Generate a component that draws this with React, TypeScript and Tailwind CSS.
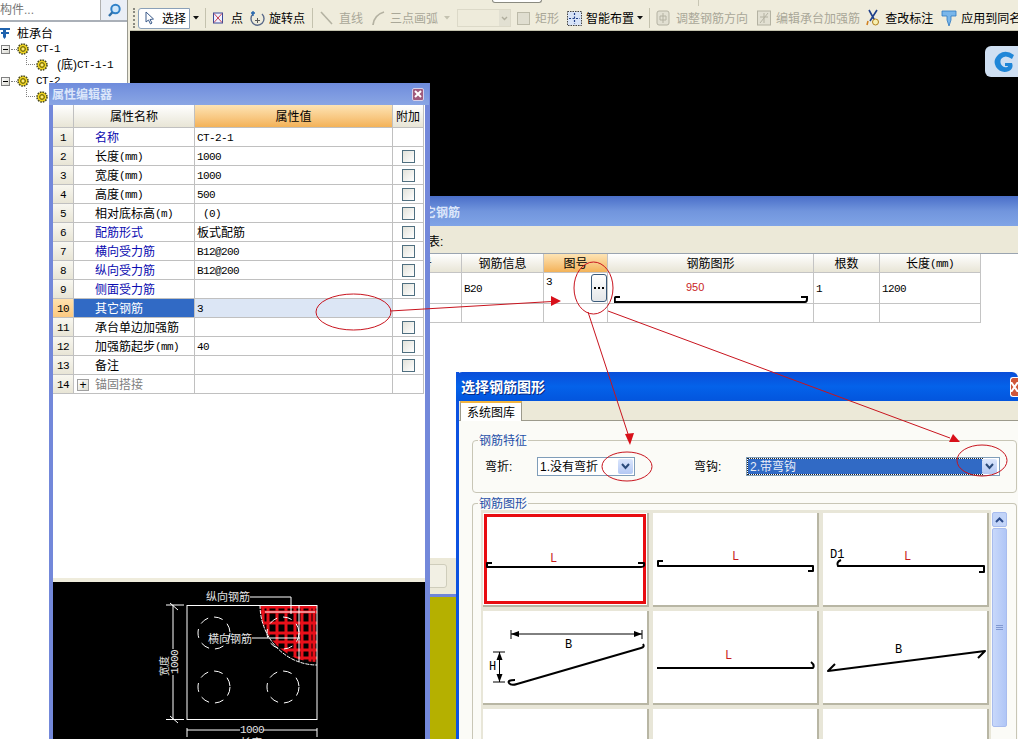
import React from "react";

const cjk = "font-['Liberation_Sans','Noto_Sans_CJK_SC',sans-serif] text-[12px] leading-none";
const mono = "font-['Liberation_Mono','Noto_Sans_CJK_SC',monospace] text-[11px] tracking-[-0.6px] leading-none";

function Gear({ size = 12 }: { size?: number }) {
  return (
    <svg width={size} height={size} viewBox="0 0 12 12" className="shrink-0">
      <circle cx="6" cy="6" r="5" fill="#f4d820" stroke="#4a4a20" strokeWidth="1.6" strokeDasharray="1.6 1" />
      <circle cx="6" cy="6" r="2.4" fill="#e8c810" stroke="#5a5a20" strokeWidth="1" />
      <circle cx="6" cy="6" r="0.9" fill="#fff8c0" />
    </svg>
  );
}

function Expander() {
  return (
    <div className="w-[9px] h-[9px] border border-[#808080] bg-gradient-to-br from-white to-[#d8d8d0] flex items-center justify-center shrink-0">
      <div className="w-[5px] h-px bg-black" />
    </div>
  );
}

function TreeLeft() {
  return (
    <div className="w-[128px] shrink-0 h-full bg-white border-r border-[#9a9a90] flex flex-col">
      <div className="h-[22px] flex border-b-2 border-[#aab0b8] shrink-0">
        <div className={`w-[101px] h-[20px] border-r border-[#b0b0b0] text-[#777] flex items-center ${cjk}`}>构件...</div>
        <div className="flex-1 bg-[#eaeef6] flex items-center justify-center">
          <svg width="15" height="15" viewBox="0 0 15 15">
            <circle cx="8.5" cy="6" r="4.2" fill="#cfe6fa" stroke="#2f80c8" strokeWidth="2" />
            <path d="M5.4 9.2 L2 13" stroke="#2f6fa8" strokeWidth="2.4" />
          </svg>
        </div>
      </div>
      <div className="relative flex-1 pt-[3px]">
        <div className="flex items-center h-[16px]">
          <svg width="10" height="14" viewBox="0 0 10 14" className="shrink-0">
            <path d="M0 2 H10 V4 H6 V6 H9 V8 H6 V11 L4.5 13 L3 11 V8 H1 V6 H3 V4 H0 Z" fill="#1f62ad" />
          </svg>
          <span className={`ml-[7px] pt-[1px] ${cjk}`}>桩承台</span>
        </div>
        <div className="flex items-center h-[16px] pl-[1px]">
          <Expander />
          <div className="w-[6px] border-t border-dotted border-[#808080] ml-[1px]" />
          <Gear />
          <span className={`ml-[7px] ${mono}`}>CT-1</span>
        </div>
        <div className="flex items-center h-[16px] pl-[26px]">
          <div className="w-[9px] h-[9px] -mt-[9px] border-l border-b border-dotted border-[#808080]" />
          <div className="ml-[1px]"><Gear /></div>
          <span className={`ml-[9px] ${cjk}`}>(底)</span>
          <span className={mono}>CT-1-1</span>
        </div>
        <div className="flex items-center h-[16px] pl-[1px]">
          <Expander />
          <div className="w-[6px] border-t border-dotted border-[#808080] ml-[1px]" />
          <Gear />
          <span className={`ml-[7px] ${mono}`}>CT-2</span>
        </div>
        <div className="flex items-center h-[16px] pl-[26px]">
          <div className="w-[9px] h-[9px] -mt-[9px] border-l border-b border-dotted border-[#808080]" />
          <div className="ml-[1px]"><Gear /></div>
        </div>
      </div>
    </div>
  );
}

function Arrow({ cls }: { cls: string }) {
  return (
    <svg width="6" height="4" viewBox="0 0 6 4" className={`shrink-0 ${cls}`}>
      <path d="M0 0 H6 L3 3.5 Z" fill="#111" />
    </svg>
  );
}

const Sep = ({ cls }: { cls: string }) => <div className={`w-px h-[20px] bg-[#c4c2ae] shrink-0 ${cls}`} />;
const Off = "text-[#a9a798] whitespace-nowrap shrink-0";
const On = "text-black whitespace-nowrap shrink-0";

function Toolbar() {
  return (
    <div className="shrink-0">
      <div className="h-[6px] bg-[#efecdc] pl-[362px] flex">
        <div className="w-[50px] h-[3px] bg-white border-x border-b border-[#8a8a80] rounded-b" />
        <div className="w-px h-[6px] bg-[#c8c6b4] ml-[156px]" />
      </div>
      <div className={`h-[25px] bg-[#efecdc] border-b border-[#c4c2ae] flex items-center pl-[3px] overflow-hidden [&>span]:pt-[2px] ${cjk}`}>
        <div className="w-[3px] h-[20px] shrink-0 border-l-2 border-dotted border-[#8a8a80]" />
        <div className="ml-[2px] w-[52px] h-[21px] shrink-0 bg-white border border-[#8aa0b8] rounded-l-[3px] flex items-center pl-[6px]">
          <svg width="10" height="14" viewBox="0 0 10 14" className="shrink-0">
            <path d="M1 1 L1 11 L3.5 9 L5.5 13 L7 12 L5 8.5 L8.5 8 Z" fill="#fff" stroke="#3a5a8a" strokeWidth="1" />
          </svg>
          <span className="ml-[7px] pt-[2px]">选择</span>
        </div>
        <Arrow cls="ml-[3px]" />
        <Sep cls="ml-[6px]" />
        <svg width="10" height="12" viewBox="0 0 10 12" className="shrink-0 ml-[7px]">
          <rect x="0.5" y="1" width="9" height="10" fill="#f0f0ff" stroke="#3a4a9a" />
          <path d="M1 1.5 L9 10.5 M9 1.5 L1 10.5" stroke="#c03040" strokeWidth="0.9" />
        </svg>
        <span className={`ml-[8px] ${On}`}>点</span>
        <svg width="15" height="17" viewBox="0 0 15 17" className="shrink-0 ml-[7px]">
          <path d="M3 4 A6.5 6.5 0 1 0 12 4" fill="none" stroke="#5a6a8a" strokeWidth="1.4" />
          <path d="M3 1 V6 M1 3 L5 3" stroke="#1f62ad" strokeWidth="1.3" />
          <path d="M7.5 8 V13 M5 10.5 H10" stroke="#5a5a5a" strokeWidth="1" />
        </svg>
        <span className={`ml-[4px] ${On}`}>旋转点</span>
        <Sep cls="ml-[7px]" />
        <svg width="13" height="14" viewBox="0 0 13 14" className="shrink-0 ml-[7px]">
          <path d="M1 1 L12 13" stroke="#b4b2a2" strokeWidth="1.6" />
        </svg>
        <span className={`ml-[6px] ${Off}`}>直线</span>
        <svg width="14" height="15" viewBox="0 0 14 15" className="shrink-0 ml-[8px]">
          <path d="M2 14 Q3 4 13 1" fill="none" stroke="#b4b2a2" strokeWidth="1.8" />
        </svg>
        <span className={`ml-[5px] ${Off}`}>三点画弧</span>
        <svg width="6" height="4" viewBox="0 0 6 4" className="shrink-0 ml-[6px]"><path d="M0 0 H6 L3 3.5 Z" fill="#c4c2b0" /></svg>
        <div className="ml-[7px] w-[54px] h-[18px] shrink-0 bg-[#eeebdb] border border-[#dcd9c8] flex justify-end">
          <div className="w-[11px] h-full bg-[#e2e0d2] flex items-center justify-center">
            <svg width="7" height="5" viewBox="0 0 7 5"><path d="M1 1 L3.5 3.5 L6 1" fill="none" stroke="#b0ae9e" strokeWidth="1.4" /></svg>
          </div>
        </div>
        <div className="ml-[6px] w-[13px] h-[13px] shrink-0 bg-[#e0ded0] border border-[#bcbaa8]" />
        <span className={`ml-[5px] ${Off}`}>矩形</span>
        <svg width="15" height="15" viewBox="0 0 15 15" className="shrink-0 ml-[8px]">
          <rect x="0.5" y="0.5" width="14" height="14" fill="#d8e4f8" stroke="#444" strokeDasharray="1.5 1" />
          <path d="M7.5 2 V13 M2 7.5 H13" stroke="#1f3f8a" strokeWidth="1.2" strokeDasharray="2 1.5" />
        </svg>
        <span className={`ml-[4px] ${On}`}>智能布置</span>
        <Arrow cls="ml-[3px]" />
        <Sep cls="ml-[6px]" />
        <svg width="14" height="16" viewBox="0 0 14 16" className="shrink-0 ml-[6px]">
          <rect x="1" y="1" width="12" height="14" rx="2" fill="#e2e0d2" stroke="#b4b2a2" />
          <path d="M7 3 V13 M4 6 H10 V10 H4 Z" fill="none" stroke="#b4b2a2" />
        </svg>
        <span className={`ml-[6px] ${Off}`}>调整钢筋方向</span>
        <svg width="14" height="16" viewBox="0 0 14 16" className="shrink-0 ml-[9px]">
          <rect x="0.5" y="1" width="13" height="14" fill="#e2e0d2" stroke="#b4b2a2" />
          <path d="M3 13 L11 3 M3 7 H11 M7 3 V13" fill="none" stroke="#b4b2a2" />
        </svg>
        <span className={`ml-[5px] ${Off}`}>编辑承台加强筋</span>
        <svg width="14" height="18" viewBox="0 0 14 18" className="shrink-0 ml-[6px]">
          <path d="M3 1 L9 12 M11 1 L4 12" stroke="#1f3f8a" strokeWidth="1.6" />
          <circle cx="9.5" cy="13" r="3" fill="#f8f0b0" stroke="#b08020" />
          <path d="M2 12 L1 16" stroke="#d08020" strokeWidth="1.5" />
        </svg>
        <span className={`ml-[5px] ${On}`}>查改标注</span>
        <svg width="16" height="18" viewBox="0 0 16 18" className="shrink-0 ml-[8px]">
          <path d="M1 2 H15 V7 H10 V11 L8 17 L6 11 V7 H1 Z" fill="#79b6ea" stroke="#2f78c0" strokeWidth="0.8" />
        </svg>
        <span className={`ml-[4px] ${On}`}>应用到同名</span>
      </div>
    </div>
  );
}

type Row = { n: number; name: React.ReactNode; val?: React.ReactNode; blue?: boolean; box?: boolean };
const U = ({ t }: { t: string }) => <span className={mono}>{t}</span>;
const rows: Row[] = [
  { n: 1, name: "名称", val: <U t="CT-2-1" />, blue: true, box: false },
  { n: 2, name: <>长度 <U t="(mm)" /></>, val: <U t="1000" />, box: true },
  { n: 3, name: <>宽度 <U t="(mm)" /></>, val: <U t="1000" />, box: true },
  { n: 4, name: <>高度 <U t="(mm)" /></>, val: <U t="500" />, box: true },
  { n: 5, name: <>相对底标高 <U t="(m)" /></>, val: <U t=" (0)" />, box: true },
  { n: 6, name: "配筋形式", val: "板式配筋", blue: true, box: true },
  { n: 7, name: "横向受力筋", val: <U t="B12@200" />, blue: true, box: true },
  { n: 8, name: "纵向受力筋", val: <U t="B12@200" />, blue: true, box: true },
  { n: 9, name: "侧面受力筋", blue: true, box: true },
  { n: 10, name: "其它钢筋", val: <U t="3" />, box: false },
  { n: 11, name: "承台单边加强筋", box: true },
  { n: 12, name: <>加强筋起步 <U t="(mm)" /></>, val: <U t="40" />, box: true },
  { n: 13, name: "备注", box: true },
];

const cell = "h-[19px] pt-[2px] border-r border-b border-[#c0c0c0] flex items-center overflow-hidden";

function Check() {
  return <div className="w-[13px] h-[13px] -mt-[1px] border border-[#4f6f80] bg-gradient-to-br from-[#e2e2da] to-white" />;
}

function PropertyEditor() {
  const head = "h-[23px] pt-[2px] border-r border-b border-[#c0c0c0] flex items-center justify-center";
  return (
    <div className={`absolute left-[49px] top-[83px] w-[381px] h-[656px] bg-[#7c8fdc] border-l-[4px] border-r-[5px] border-[#7388da] flex flex-col z-20 ${cjk}`}>
      <div className="h-[22px] shrink-0 -mx-[4px] px-[3px] bg-gradient-to-b from-[#6f8cdc] to-[#8aa6e4] flex items-center justify-between">
        <span className="text-[#dbe6fa] font-bold pt-[1px]">属性编辑器</span>
        <div className="w-[12px] h-[13px] mr-[2px] bg-[#a05a7c] border border-[#d8d0e8] rounded-[2px] flex items-center justify-center">
          <svg width="8" height="8" viewBox="0 0 8 8"><path d="M1 1 L7 7 M7 1 L1 7" stroke="#fff" strokeWidth="2" /></svg>
        </div>
      </div>
      <div className="flex-1 bg-white flex flex-col min-h-0">
        <div className="grid grid-cols-[21px_121px_198px_31px]">
          <div className={`${head} bg-gradient-to-b from-white to-[#e8e5d6]`} />
          <div className={`${head} bg-gradient-to-b from-white to-[#e8e5d6]`}>属性名称</div>
          <div className={`${head} bg-gradient-to-b from-[#fde4b4] to-[#f3b257]`}>属性值</div>
          <div className={`${head} bg-gradient-to-b from-white to-[#e8e5d6]`}>附加</div>
          {rows.map((r) => (
            <React.Fragment key={r.n}>
              <div className={`${cell} justify-center ${mono} ${r.n === 10 ? "bg-gradient-to-b from-[#ffe2ae] to-[#fcc980]" : "bg-gradient-to-b from-[#f8f7f0] to-[#e8e5d6]"}`}>{r.n}</div>
              <div className={`${cell} pl-[21px] whitespace-nowrap ${r.n === 10 ? "bg-[#316ac5] text-white" : r.blue ? "text-[#0b0bb0]" : ""}`}>{r.name}</div>
              <div className={`${cell} pl-[2px] whitespace-pre ${r.n === 10 ? "bg-[#dce6f5]" : ""}`}>{r.val}</div>
              <div className={`${cell} justify-center`}>{r.box ? <Check /> : null}</div>
            </React.Fragment>
          ))}
          <div className={`${cell} justify-center ${mono} bg-gradient-to-b from-[#f8f7f0] to-[#e8e5d6]`}>14</div>
          <div className={`${cell} pl-[3px] text-[#808080]`}>
            <div className="w-[12px] h-[12px] -mt-[1px] border border-[#a0a0a0] bg-gradient-to-br from-white to-[#dcdcd0] flex items-center justify-center text-black text-[12px] font-['Liberation_Sans',sans-serif]">+</div>
            <span className="ml-[6px]">锚固搭接</span>
          </div>
          <div className={cell} />
          <div className={cell} />
        </div>
        <div className="flex-1 border-b-[4px] border-[#efecdc]" />
        <div className="h-[157px] shrink-0 bg-black overflow-hidden">
          <svg width="372" height="157" viewBox="53 582 372 157">
            <defs>
              <clipPath id="quarter"><circle cx="317" cy="605" r="57" /></clipPath>
            </defs>
            <g clipPath="url(#quarter)" stroke="#e8101a" strokeWidth="3">
              {[263, 268, 277, 286, 295, 302, 310, 314].map((x) => <line key={x} x1={x} y1="605" x2={x} y2="665" />)}
              {[607, 612, 623, 633, 642, 650, 658].map((y) => <line key={y} x1="255" y1={y} x2="317" y2={y} />)}
            </g>
            <g fill="none" stroke="#fff">
              <rect x="187" y="605.5" width="130" height="114" />
              <path d="M260 605 A57 60 0 0 0 317 665" strokeDasharray="4 1" />
              <path d="M250 597 H291 V614" />
              <path d="M252 638 H300" />
              <path d="M299 606 V662 M265 612 H315" />
              <circle cx="214" cy="633" r="16" strokeDasharray="9 6" />
              <circle cx="283" cy="633" r="16" strokeDasharray="9 6" />
              <circle cx="214" cy="687" r="16" strokeDasharray="9 6" />
              <circle cx="283" cy="687" r="16" strokeDasharray="9 6" />
              <path d="M166 605 H184 M166 719.5 H184 M173 605 V649 M173 675 V719" />
              <path d="M170 603 L178 610 M170 716 L178 723" />
              <path d="M187 730 H240 M263 730 H317 M187 728 V737 M317 728 V737" />
            </g>
            <g fill="#e4e4e4" fontFamily="'Noto Sans CJK SC',sans-serif" fontSize="11">
              <text x="206" y="601">纵向钢筋</text>
              <text x="208" y="643">横向钢筋</text>
              <text x="240" y="733" fontFamily="'Liberation Mono',monospace" fontSize="11" letterSpacing="-0.6">1000</text>
              <text x="240" y="747">长度</text>
              <text transform="translate(178 674) rotate(-90)" fontFamily="'Liberation Mono',monospace" fontSize="11" letterSpacing="-0.6">1000</text>
              <text transform="translate(168 676) rotate(-90)" fontSize="10">宽度</text>
            </g>
          </svg>
        </div>
      </div>
    </div>
  );
}

function RebarWindow() {
  const c = "border-r border-[#c4c4c4] border-b flex";
  return (
    <div className={`absolute left-[230px] top-[196px] right-0 bottom-[142px] bg-white flex flex-col border-b-[3px] border-[#6f86da] ${cjk}`}>
      <div className="h-[30px] shrink-0 bg-gradient-to-b from-[#4a6ec8] via-[#7195dd] to-[#80a4e6] flex items-center pl-[182px] pt-[3px]">
        <span className="text-[#dbe6fa] font-bold">其它钢筋</span>
      </div>
      <div className="h-[28px] shrink-0 bg-[#ece9d8] border-b border-[#9aa4b0] pl-[162px] flex items-center pt-[4px]">
        <span>钢筋列表:</span>
      </div>
      <div className="grid grid-cols-[232px_82px_64px_206px_66px_101px] border-[#c4c4c4] w-[751px] shrink-0">
        {[
          ["筋号", "text-right pr-[29px]"],
          ["钢筋信息", "justify-center"],
          ["图号", "justify-center bg-gradient-to-b from-[#fde4b4] to-[#f3b257]"],
          ["钢筋图形", "justify-center"],
          ["根数", "justify-center"],
          ["长度", "justify-center"],
        ].map(([t, k], i) => (
          <div key={i} className={`h-[19px] pt-[2px] items-center ${c} ${k.includes("from-") ? "" : "bg-gradient-to-b from-white to-[#e8e5d6]"} ${k} ${i === 0 ? "justify-end" : ""}`}>
            {t}{i === 5 ? <U t="(mm)" /> : null}
          </div>
        ))}
        <div className={`h-[31px] ${c}`} />
        <div className={`h-[31px] pt-[3px] items-center ${c} pl-[2px] ${mono}`}>B20</div>
        <div className={`h-[31px] ${c} pl-[2px] items-start pt-[4px] justify-between ${mono}`}>
          <span>3</span>
          <div className="w-[16px] h-[28px] -mt-[3px] mr-0 rounded-[3px] border border-[#3a5a7a] bg-gradient-to-b from-white to-[#e4e6e8] flex items-center justify-center gap-[2px]">
            <div className="w-[2px] h-[2px] bg-black" />
            <div className="w-[2px] h-[2px] bg-black" />
            <div className="w-[2px] h-[2px] bg-black" />
          </div>
        </div>
        <div className={`h-[31px] ${c} flex-col items-start justify-start`}>
          <span className="text-[#c81e1e] font-['Liberation_Sans',sans-serif] text-[11px] mt-[9px] ml-[78px]">950</span>
          <svg width="196" height="10" viewBox="0 0 196 10" className="mt-[1px] ml-[6px] shrink-0">
            <path d="M6 3 H2 Q0.8 3 0.8 5 V8 H191 Q193 8 193 5 V3 H187" fill="none" stroke="#000" strokeWidth="2" />
          </svg>
        </div>
        <div className={`h-[31px] pt-[3px] items-center ${c} pl-[2px] ${mono}`}>1</div>
        <div className={`h-[31px] pt-[3px] items-center ${c} pl-[2px] ${mono}`}>1200</div>
        {[0, 1, 2, 3, 4, 5].map((i) => <div key={i} className={`h-[19px] ${c}`} />)}
      </div>
      <div className="flex-1" />
      <div className="h-[36px] shrink-0 bg-[#ece9d8] pl-[100px] flex items-center">
        <div className="w-[117px] h-[24px] rounded-[3px] bg-[#f2f0e4] border border-[#cfcdbb]" />
      </div>
    </div>
  );
}

function HookCell({ children, red }: { children?: React.ReactNode; red?: boolean }) {
  return (
    <div className="w-[166px] h-[94px] bg-white border-r-2 border-b-2 border-[#b8b6a4] relative">
      {red ? <div className="absolute inset-[1px] border-[3px] border-[#e80c10]" /> : null}
      <svg width="164" height="92" viewBox="0 0 164 92" className="block relative">{children}</svg>
    </div>
  );
}
const L = ({ x, y, t = "L", fill = "#c81e1e" }: { x: number; y: number; t?: string; fill?: string }) => (
  <text x={x} y={y} fill={fill} fontSize="12" fontFamily="'Liberation Mono',monospace">{t}</text>
);
const line = { fill: "none", stroke: "#000", strokeWidth: 2, strokeLinejoin: "round" as const };

function ShapeDialog() {
  return (
    <div className={`absolute left-[456px] top-[372px] right-0 bottom-0 bg-[#fbfbf7] border-l-[3px] border-[#0c52e0] flex flex-col z-10 ${cjk}`}>
      <div className="h-[29px] shrink-0 -ml-[3px] bg-gradient-to-b from-[#0a4ed8] via-[#0462ea] to-[#0355dd] rounded-t-[6px] flex items-center justify-between pl-[5px]">
        <span className="text-white font-bold text-[14px] [text-shadow:1px_1px_0_#0a2a80]">选择钢筋图形</span>
        <div className="w-[8px] h-[20px] bg-[#d0583a] rounded-l-[3px] border border-r-0 border-white flex items-center justify-start overflow-hidden">
          <svg width="7" height="10" viewBox="0 0 7 10" className="shrink-0"><path d="M0 0 L7 10 M7 0 L0 10" stroke="#fff" strokeWidth="2" /></svg>
        </div>
      </div>
      <div className="h-[20px] shrink-0 bg-[#ece9d8] border-b border-[#9c9a8c] flex items-end pl-[1px]">
        <div className="w-[62px] h-[20px] -mb-px pt-[2px] bg-white border-x border-[#9c9a8c] border-t-2 border-t-[#f2b540] flex items-center justify-center">系统图库</div>
      </div>
      <div className="relative ml-[13px] mr-[1px] mt-[19px] h-[53px] border border-[#c8c6b6] rounded-[4px] shrink-0 flex items-center">
        <span className="absolute left-[5px] -top-[6px] bg-[#fbfbf7] text-[#1f4fa8] px-[1px]">钢筋特征</span>
        <span className="ml-[12px] w-[27px] shrink-0 whitespace-nowrap">弯折:</span>
        <div className="ml-[25px] w-[98px] shrink-0 h-[19px] border border-[#7f9db9] bg-white flex items-center justify-between pl-[2px]">
          <span>1.没有弯折</span>
          <Combo />
        </div>
        <span className="ml-[59px] w-[27px] shrink-0 whitespace-nowrap">弯钩:</span>
        <div className="ml-[25px] w-[254px] shrink-0 h-[19px] border border-[#7f9db9] bg-white flex items-center justify-between p-[1px]">
          <span className="flex-1 h-full bg-[#316ac5] text-[#e8eef8] flex items-center pl-[2px] outline-1 outline-dotted outline-[#222]">2.带弯钩</span>
          <Combo />
        </div>
      </div>
      <div className="relative ml-[13px] mr-[1px] mt-[10px] flex-1 border-t border-x border-[#c8c6b6] rounded-t-[4px] min-h-0">
        <span className="absolute left-[5px] -top-[6px] bg-[#fbfbf7] text-[#1f4fa8] px-[1px]">钢筋图形</span>
        <div className="absolute left-[8px] top-[6px] w-[510px] h-[231px] bg-[#e8e6d8] pl-[2px] pt-[3px] grid grid-cols-[170px_170px_170px] grid-rows-[98px_98px_98px] overflow-hidden">
          <HookCell red>
            <path d="M9 50 H4 V54 H158 Q162 54 161 50 H155" {...line} />
            <L x={67} y={49} />
          </HookCell>
          <HookCell>
            <path d="M10 48 H5 V53 H160 V58 H155" {...line} />
            <L x={79} y={47} />
          </HookCell>
          <HookCell>
            <path d="M18 47 Q13 49 15 53 H161 V59 H156" {...line} />
            <L x={81} y={47} />
            <L x={7} y={45} t="D1" fill="#000" />
          </HookCell>
          <HookCell>
            <path d="M28 23 H159 M28 19 V28 M159 19 V28 M16.5 41 V71 M10 41 H22 M10 71 H22" fill="none" stroke="#000" strokeWidth="1" />
            <path d="M28 23 L36 20 V26 Z M159 23 L151 20 V26 Z M16.5 41 L13.5 49 H19.5 Z M16.5 71 L13.5 63 H19.5 Z" fill="#000" />
            <path d="M32 69 Q24 69 26 72 Q28 75 34 73 L158 37 Q162 36 160 33" {...line} />
            <L x={82} y={37} t="B" fill="#000" />
            <L x={6} y={59} t="H" fill="#000" />
          </HookCell>
          <HookCell>
            <path d="M4 57 H160 Q162 54 158 51" {...line} />
            <L x={72} y={48} />
          </HookCell>
          <HookCell>
            <path d="M12 53 L5 60 L162 40 L155 47" {...line} />
            <L x={72} y={42} t="B" fill="#000" />
          </HookCell>
          <HookCell />
          <HookCell />
          <HookCell />
        </div>
        <div className="absolute left-[519px] top-[8px] w-[15px] h-[215px] flex flex-col gap-[1px]">
          <div className="h-[15px] rounded-[2px] bg-[#c2d4f8] border border-[#a8bcee] flex items-center justify-center">
            <svg width="9" height="6" viewBox="0 0 9 6"><path d="M1 5 L4.5 1.5 L8 5" fill="none" stroke="#2a4a8a" strokeWidth="2" /></svg>
          </div>
          <div className="flex-1 rounded-[2px] bg-gradient-to-r from-[#c8d8fa] to-[#b0c6f6] border border-[#a8bcee] flex flex-col items-center justify-center gap-[1px]">
            <div className="w-[7px] h-px bg-[#8098d0]" />
            <div className="w-[7px] h-px bg-[#8098d0]" />
            <div className="w-[7px] h-px bg-[#8098d0]" />
          </div>
        </div>
      </div>
    </div>
  );
}

function Combo() {
  return (
    <div className="w-[15px] h-[15px] mr-[1px] shrink-0 rounded-[2px] bg-gradient-to-b from-[#dbe6fc] to-[#b4c8f4] flex items-center justify-center">
      <svg width="9" height="7" viewBox="0 0 9 7"><path d="M1 1 L4.5 5 L8 1" fill="none" stroke="#2a4a7a" strokeWidth="2" /></svg>
    </div>
  );
}

function Annotations() {
  const s = { fill: "none", stroke: "#c8141e", strokeWidth: 1 };
  return (
    <svg width="1018" height="739" viewBox="0 0 1018 739" className="absolute inset-0 z-30 pointer-events-none">
      <ellipse cx="353.5" cy="312" rx="37.5" ry="18" {...s} />
      <ellipse cx="593.5" cy="288" rx="19.5" ry="26" {...s} />
      <ellipse cx="627" cy="466.5" rx="25" ry="14.5" {...s} />
      <ellipse cx="982" cy="460.5" rx="25" ry="15.5" {...s} />
      <path d="M390 311 L552 301.5" {...s} />
      <path d="M588 312 L629 437" {...s} />
      <path d="M608 311 L950 438" {...s} />
      <path d="M561 301 L551 296 L551 306 Z" fill="#d8101a" />
      <path d="M630 445 L625 434 L634 433 Z" fill="#d8101a" />
      <path d="M960 442 L949 442 L953 434 Z" fill="#d8101a" />
    </svg>
  );
}

export default function App() {
  return (
    <div className={`relative w-[1018px] h-[739px] overflow-hidden flex bg-white text-black ${cjk}`}>
      <TreeLeft />
      <div className="flex-1 flex flex-col min-w-0 pl-[2px] bg-[#efecdc]">
        <Toolbar />
        <div className="flex-1 bg-[#b5b000] relative">
          <div className="h-[165px] bg-black" />
          <div className="absolute right-0 top-[15px] w-[33px] h-[31px] rounded-l-[6px] bg-[#cfdff2] flex items-center justify-end overflow-hidden">
            <svg width="26" height="24" viewBox="0 0 26 24">
              <path d="M22 5 Q14 -1 7 4 Q0 10 4 17 Q9 24 17 21 Q22 18 20 13 H13 V16 H16 Q16 18 12 17 Q7 14 9 9 Q13 4 20 9 Z" fill="#1f86d8" />
            </svg>
          </div>
        </div>
      </div>
      <RebarWindow />
      <ShapeDialog />
      <PropertyEditor />
      <Annotations />
    </div>
  );
}
